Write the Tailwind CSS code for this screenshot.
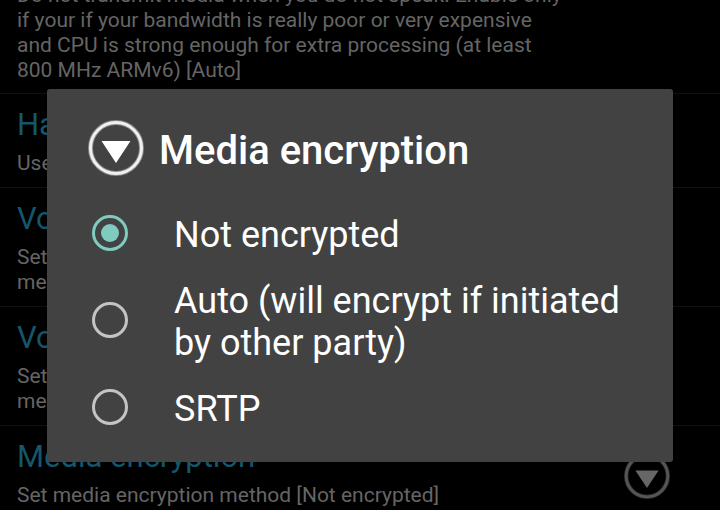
<!DOCTYPE html>
<html lang="en">
<head>
<meta charset="utf-8">
<meta name="viewport" content="width=device-width, initial-scale=1">
<title>Media encryption</title>
<script src="https://cdn.jsdelivr.net/npm/@tailwindcss/browser@4"></script>
</head>
<body class="relative h-screen overflow-hidden bg-black font-['Roboto','Liberation_Sans',sans-serif]">
  <main class="-mt-[17px] text-[21px] leading-[25px] text-[#656565]">
    <section class="border-b border-[#101010] px-[17px] pb-[10px]">
      <p class="max-w-[552px]">Do not transmit media when you do not speak. Enable only if your if your bandwidth is really poor or very expensive<br>and CPU is strong enough for extra processing (at least<br>800 MHz ARMv6) [Auto]</p>
    </section>
    <section class="flex flex-col gap-[7px] border-b border-[#101010] px-[17px] pt-3 pb-[11px]">
      <h2 class="text-[31px] leading-[38px] text-[#15566b]">Hardware</h2>
      <p>Use</p>
    </section>
    <section class="flex flex-col gap-[7px] border-b border-[#101010] px-[17px] pt-3 pb-[11px]">
      <h2 class="text-[31px] leading-[38px] text-[#15566b]">Volume</h2>
      <p>Set<br>media</p>
    </section>
    <section class="flex flex-col gap-[7px] border-b border-[#101010] px-[17px] pt-3 pb-[11px]">
      <h2 class="text-[31px] leading-[38px] text-[#15566b]">Volume</h2>
      <p>Set<br>media</p>
    </section>
    <section class="flex items-center justify-between pr-[49px] pl-[17px] pt-3 pb-[11px]">
      <div class="flex flex-col gap-[7px]">
        <h2 class="text-[31px] leading-[38px] text-[#15566b]">Media encryption</h2>
        <p>Set media encryption method [Not encrypted]</p>
      </div>
      <button type="button" aria-label="Choose media encryption" class="pt-[6px]">
        <svg class="size-12" viewBox="0 0 60 60" aria-hidden="true"><circle cx="30" cy="30" r="26" fill="none" stroke="#2c2c2c" stroke-width="5.500"/><circle cx="30" cy="30" r="26" fill="none" stroke="#555" stroke-width="3.500"/><path d="M15.500 23h29L30 45z" fill="#666"/></svg>
      </button>
    </section>
  </main>

  <div role="dialog" aria-labelledby="dialog-title" class="absolute inset-x-[47px] top-[89px] rounded-[3px] bg-[#424242] pb-[22px] text-white">
    <header class="flex items-center gap-[13px] pt-[29px] pb-[22px] pl-[39px]">
      <svg class="size-[60px]" viewBox="0 0 60 60" aria-hidden="true"><circle cx="30" cy="30" r="25.500" fill="none" stroke="#8a8a8a" stroke-width="5"/><circle cx="30" cy="30" r="25.500" fill="none" stroke="#f0f0f0" stroke-width="3"/><path d="M15.500 23h29L30 45z" fill="#fff"/></svg>
      <h1 id="dialog-title" class="pt-[6px] text-[40px] leading-[48px] font-medium">Media encryption</h1>
    </header>
    <fieldset>
      <legend class="sr-only">Media encryption</legend>
      <label class="flex items-center gap-[46px] py-[10px] pr-10 pl-[45px] text-[36px] leading-[42px]">
        <input type="radio" name="encryption" checked class="grid size-9 shrink-0 appearance-none place-content-center rounded-full border-[3px] border-[#c4c4c4] before:size-[18px] before:rounded-full checked:border-[#80cbc0] checked:before:bg-[#80cbc0]">
        <span class="pt-1">Not encrypted</span>
      </label>
      <label class="flex items-center gap-[46px] py-[10px] pr-10 pl-[45px] text-[36px] leading-[42px]">
        <input type="radio" name="encryption" class="grid size-9 shrink-0 appearance-none place-content-center rounded-full border-[3px] border-[#c4c4c4] before:size-[18px] before:rounded-full checked:border-[#80cbc0] checked:before:bg-[#80cbc0]">
        <span class="pt-1">Auto (will encrypt if initiated by other party)</span>
      </label>
      <label class="flex items-center gap-[46px] py-[10px] pr-10 pl-[45px] text-[36px] leading-[42px]">
        <input type="radio" name="encryption" class="grid size-9 shrink-0 appearance-none place-content-center rounded-full border-[3px] border-[#c4c4c4] before:size-[18px] before:rounded-full checked:border-[#80cbc0] checked:before:bg-[#80cbc0]">
        <span class="pt-1">SRTP</span>
      </label>
    </fieldset>
  </div>
</body>
</html>
